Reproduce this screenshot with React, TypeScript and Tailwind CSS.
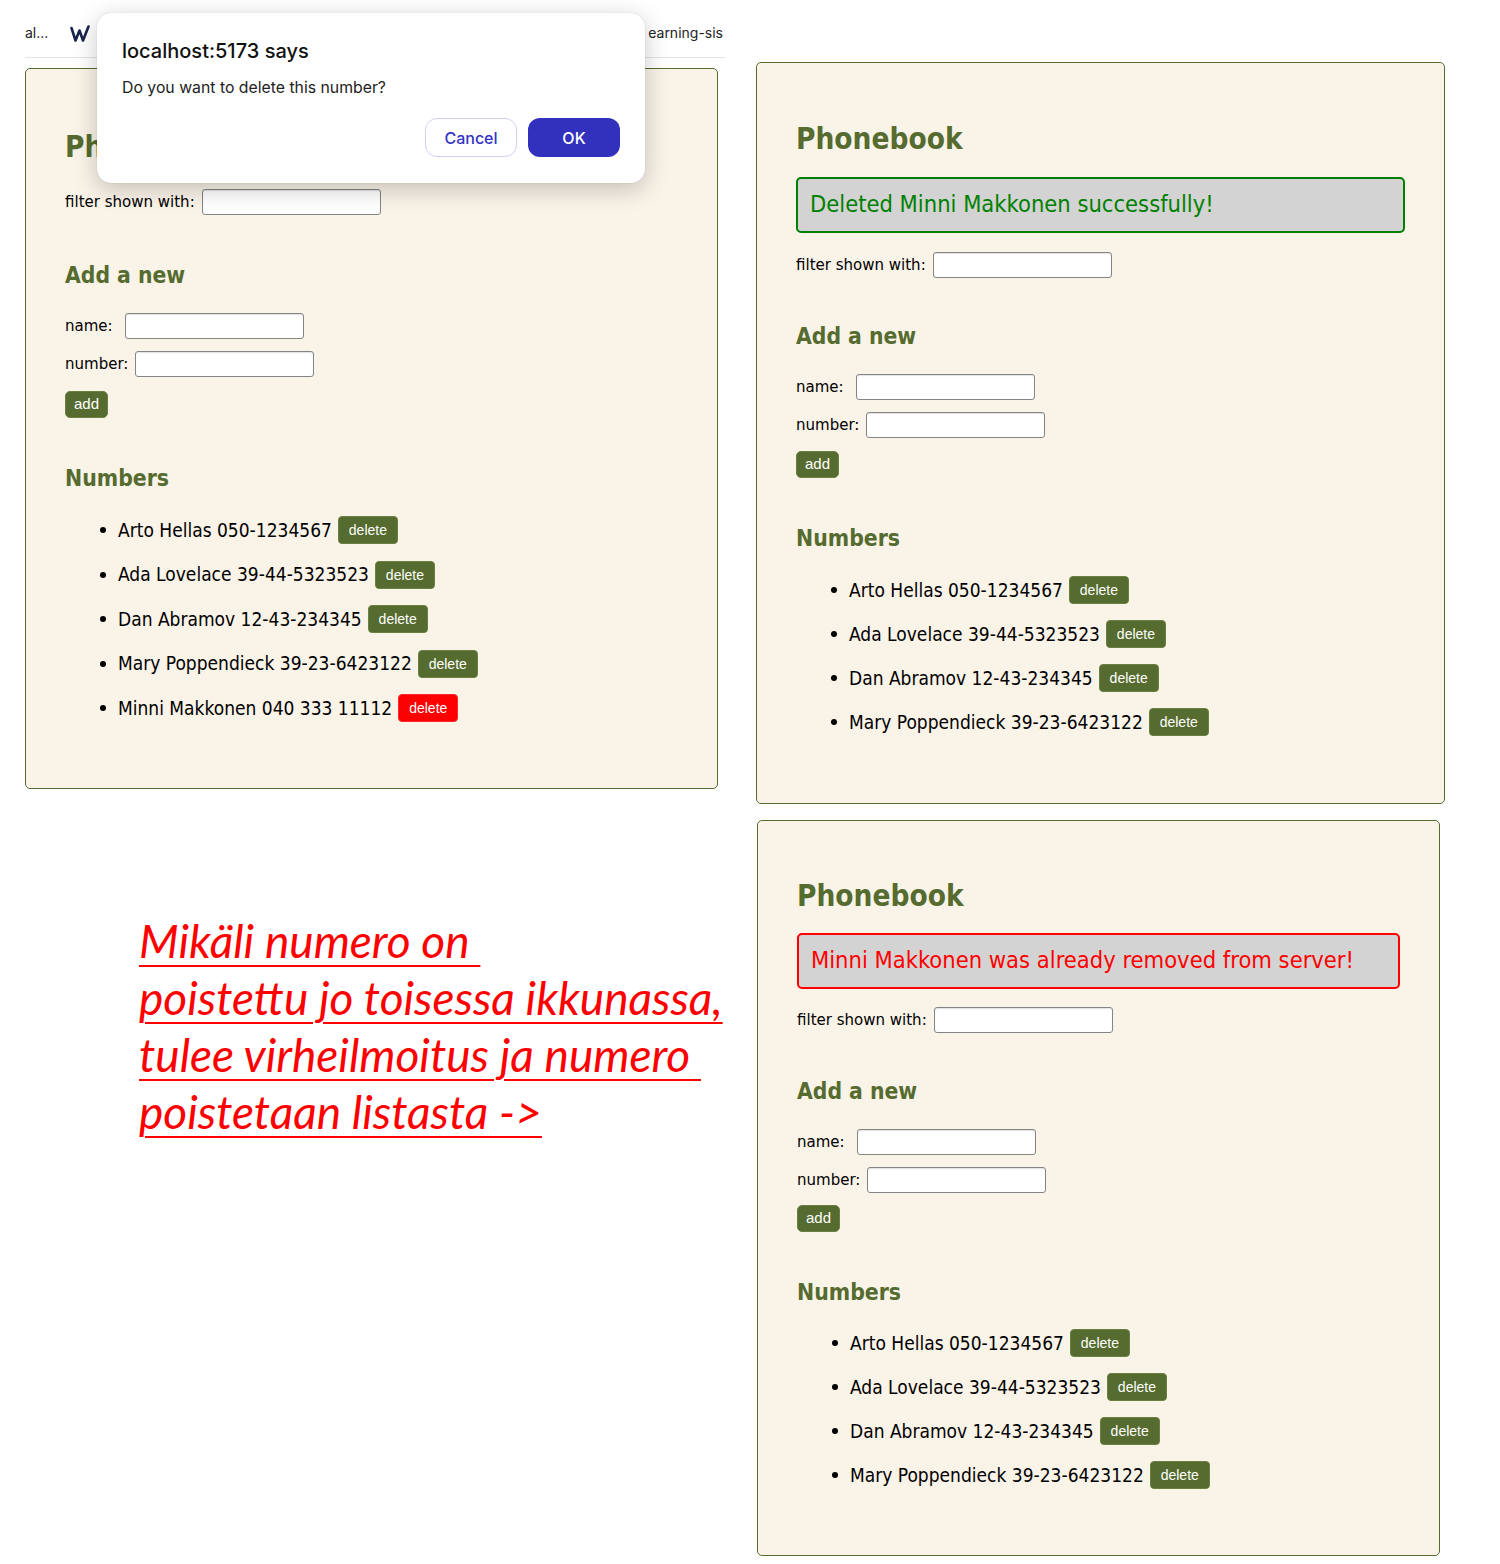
import React from "react";

const TXT = "font-['DejaVu_Sans_Condensed','DejaVu_Sans',sans-serif]";
const BTN = "font-['Liberation_Sans',Arial,sans-serif]";

type Cfg = {
  box: string;
  pt: string;
  notifMt: string;
  filterMt: string;
  addHMt: string;
  nameMt: string;
  numMt: string;
  addBtnMt: string;
  numsMt: string;
  firstRowMt: string;
  rowMt: string;
};

const rowsBase: [string, string][] = [
  ["Arto Hellas", "050-1234567"],
  ["Ada Lovelace", "39-44-5323523"],
  ["Dan Abramov", "12-43-234345"],
  ["Mary Poppendieck", "39-23-6423122"],
];

function Input({ className }: { className: string }) {
  return (
    <div
      className={`h-[26px] w-[179px] rounded-[3px] border border-[#858585] bg-white shadow-[inset_0_1px_1px_rgba(0,0,0,0.12)] ${className}`}
    />
  );
}

function Panel({
  cfg,
  notif,
  rows,
  redLast,
}: {
  cfg: Cfg;
  notif?: { text: string; kind: "ok" | "err" };
  rows: [string, string][];
  redLast?: boolean;
}) {
  return (
    <div
      className={`flex flex-col rounded-[5px] border border-[#556b2f] bg-[#faf3e8] px-[39px] text-black ${TXT} ${cfg.box} ${cfg.pt}`}
    >
      <div className="h-[40px] text-[29.5px] font-bold leading-[40px] text-[#556b2f]">Phonebook</div>
      {notif && (
        <div
          className={`flex h-[56px] items-center rounded-[5px] border-2 bg-[#d3d3d3] pl-[12px] text-[23.5px] ${cfg.notifMt} ${
            notif.kind === "ok" ? "border-[#008000] text-[#008000]" : "border-[#ff0000] text-[#ff0000]"
          }`}
        >
          {notif.text}
        </div>
      )}
      <div className={`flex h-[26px] items-center text-[16.7px] ${cfg.filterMt}`}>
        <span>filter shown with:</span>
        <Input className="ml-[7px]" />
      </div>
      <div className={`h-[30px] text-[22.7px] font-bold leading-[30px] text-[#556b2f] ${cfg.addHMt}`}>Add a new</div>
      <div className={`flex h-[26px] items-center text-[16.7px] ${cfg.nameMt}`}>
        <span>name:</span>
        <Input className="ml-[12px]" />
      </div>
      <div className={`flex h-[26px] items-center text-[16.7px] ${cfg.numMt}`}>
        <span>number:</span>
        <Input className="ml-[7px]" />
      </div>
      <div className={cfg.addBtnMt}>
        <div
          className={`flex h-[27px] w-[43px] items-center justify-center rounded-[5px] border border-[#6b8040] bg-[#556b2f] text-[15px] text-white ${BTN}`}
        >
          add
        </div>
      </div>
      <div className={`h-[30px] text-[22.8px] font-bold leading-[30px] text-[#556b2f] ${cfg.numsMt}`}>Numbers</div>
      <div className="flex flex-col">
        {rows.map(([n, num], i) => {
          const red = redLast && i === rows.length - 1;
          return (
            <div key={n} className={`flex h-[28px] items-center ${i === 0 ? cfg.firstRowMt : cfg.rowMt}`}>
              <div className="ml-[35px] mr-[12px] h-[6px] w-[6px] rounded-full bg-black" />
              <span className="text-[19px]">
                {n} {num}
              </span>
              <div
                className={`ml-[6px] flex h-[28px] w-[60px] items-center justify-center rounded-[4px] border pt-[1px] text-[14px] text-white ${BTN} ${
                  red ? "border-[#ff2a2a] bg-[#ff0000]" : "border-[#6b8040] bg-[#556b2f]"
                }`}
              >
                delete
              </div>
            </div>
          );
        })}
      </div>
    </div>
  );
}

const leftCfg: Cfg = {
  box: "w-[693px] h-[721px]",
  pt: "pt-[58px]",
  notifMt: "",
  filterMt: "mt-[22px]",
  addHMt: "mt-[45px]",
  nameMt: "mt-[23px]",
  numMt: "mt-[12px]",
  addBtnMt: "mt-[14px]",
  numsMt: "mt-[45px]",
  firstRowMt: "mt-[23px]",
  rowMt: "mt-[16.5px]",
};

const topCfg: Cfg = {
  box: "w-[689px] h-[742px]",
  pt: "pt-[56px]",
  notifMt: "mt-[18px]",
  filterMt: "mt-[19px]",
  addHMt: "mt-[43px]",
  nameMt: "mt-[23px]",
  numMt: "mt-[12px]",
  addBtnMt: "mt-[13px]",
  numsMt: "mt-[45px]",
  firstRowMt: "mt-[23px]",
  rowMt: "mt-[16px]",
};

const botCfg: Cfg = {
  box: "w-[683px] h-[736px]",
  pt: "pt-[55px]",
  notifMt: "mt-[17px]",
  filterMt: "mt-[18px]",
  addHMt: "mt-[43px]",
  nameMt: "mt-[23px]",
  numMt: "mt-[12px]",
  addBtnMt: "mt-[12px]",
  numsMt: "mt-[45px]",
  firstRowMt: "mt-[22px]",
  rowMt: "mt-[16px]",
};

function WLogo() {
  return (
    <svg width="20" height="18" viewBox="0 0 20 18" fill="none">
      <path
        d="M1.5 3 L5.5 15.5 L9.5 5.5 L13 15.5 L18.5 1.5"
        stroke="#17234a"
        strokeWidth="2.6"
        strokeLinecap="round"
        strokeLinejoin="round"
      />
    </svg>
  );
}

export default function App() {
  return (
    <div className="relative flex h-[1564px] w-[1500px] overflow-hidden bg-white">
      {/* left column */}
      <div className="flex w-[740px] flex-col pl-[25px]">
        <div className="flex h-[58px] w-[700px] items-start border-b border-[#e3e3e3] pt-[24px] font-['Inter',sans-serif] text-[14px] text-[#222]">
          <span className="leading-[18px]">al...</span>
          <span className="ml-[22px] mt-[1px]">
            <WLogo />
          </span>
          <span className="ml-auto mr-[2px] leading-[18px]">earning-sis</span>
        </div>
        <div className="mt-[10px]">
          <Panel
            cfg={leftCfg}
            rows={[...rowsBase, ["Minni Makkonen", "040 333 11112"]]}
            redLast
          />
        </div>
        <div className="mt-[123px] pl-[114px] font-['Lato',sans-serif] text-[46px] italic leading-[57px] text-[#ff0000]">
          <div className="underline decoration-2 underline-offset-[7px]">Mikäli numero on&nbsp;</div>
          <div className="underline decoration-2 underline-offset-[7px]">poistettu jo toisessa ikkunassa,</div>
          <div className="underline decoration-2 underline-offset-[7px]">tulee virheilmoitus ja numero&nbsp;</div>
          <div className="underline decoration-2 underline-offset-[7px]">poistetaan listasta -&gt;</div>
        </div>
      </div>

      {/* right column */}
      <div className="flex flex-col pl-[16px] pt-[62px]">
        <Panel cfg={topCfg} rows={rowsBase} notif={{ text: "Deleted Minni Makkonen successfully!", kind: "ok" }} />
        <div className="ml-[1px] mt-[16px]">
          <Panel
            cfg={botCfg}
            rows={rowsBase}
            notif={{ text: "Minni Makkonen was already removed from server!", kind: "err" }}
          />
        </div>
      </div>

      {/* confirm dialog */}
      <div className="absolute left-[97px] top-[13px] flex h-[170px] w-[548px] flex-col rounded-[14px] bg-white px-[25px] font-['Inter',sans-serif] shadow-[0_6px_24px_rgba(0,0,0,0.22),0_0_1px_rgba(0,0,0,0.25)]">
        <div className="mt-[26px] text-[20px] font-medium leading-[24px] text-[#111]">localhost:5173 says</div>
        <div className="mt-[15px] text-[15.8px] leading-[20px] text-[#222]">Do you want to delete this number?</div>
        <div className="mt-[20px] flex justify-end gap-[11px]">
          <div className="flex h-[39px] w-[92px] items-center justify-center rounded-[12px] border border-[#cfd0f5] bg-white text-[16px] font-medium text-[#3434c4]">
            Cancel
          </div>
          <div className="flex h-[39px] w-[92px] items-center justify-center rounded-[12px] bg-[#3131be] text-[16px] font-medium text-white">
            OK
          </div>
        </div>
      </div>
    </div>
  );
}
